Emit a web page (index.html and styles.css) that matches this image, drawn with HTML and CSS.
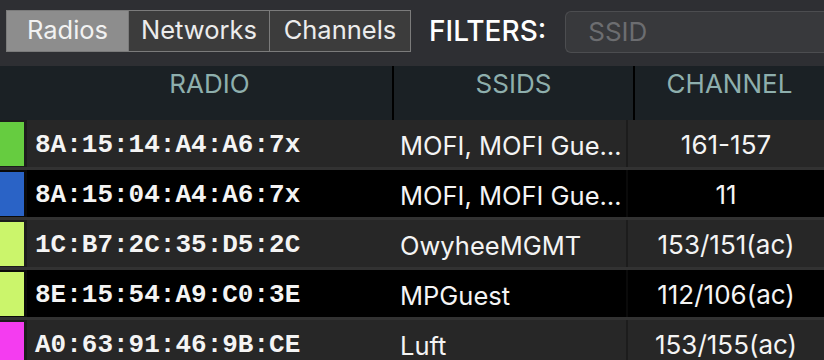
FILE: index.html
```html
<!DOCTYPE html>
<html lang="en">
<head>
<meta charset="utf-8">
<title>Radios</title>
<link rel="stylesheet" href="styles.css">
</head>
<body>
<div class="toolbar">
  <div class="segmented">
    <div class="seg seg-radios selected">Radios</div>
    <div class="seg seg-wide">Networks</div>
    <div class="seg seg-wide">Channels</div>
  </div>
  <div class="filters-label">FILTERS:</div>
  <div class="search"><span class="placeholder">SSID</span></div>
</div>
<div class="table">
  <div class="thead">
    <div class="th th-radio">RADIO</div>
    <div class="th">SSIDS</div>
    <div class="th">CHANNEL</div>
  </div>
  <div class="row odd">
    <div class="bar" style="background:#66cc40"></div>
    <div class="cell mac">8A:15:14:A4:A6:7x</div>
    <div class="cell ssid" title="MOFI, MOFI Guest">MOFI, MOFI Gue…</div>
    <div class="cell chan">161-157</div>
  </div>
  <div class="row even">
    <div class="bar" style="background:#2a63c6"></div>
    <div class="cell mac">8A:15:04:A4:A6:7x</div>
    <div class="cell ssid" title="MOFI, MOFI Guest">MOFI, MOFI Gue…</div>
    <div class="cell chan">11</div>
  </div>
  <div class="row odd">
    <div class="bar" style="background:#cbf56b"></div>
    <div class="cell mac">1C:B7:2C:35:D5:2C</div>
    <div class="cell ssid">OwyheeMGMT</div>
    <div class="cell chan">153/151(ac)</div>
  </div>
  <div class="row even">
    <div class="bar" style="background:#cbf56b"></div>
    <div class="cell mac">8E:15:54:A9:C0:3E</div>
    <div class="cell ssid">MPGuest</div>
    <div class="cell chan">112/106(ac)</div>
  </div>
  <div class="row odd">
    <div class="bar" style="background:#f43cf0"></div>
    <div class="cell mac">A0:63:91:46:9B:CE</div>
    <div class="cell ssid">Luft</div>
    <div class="cell chan">153/155(ac)</div>
  </div>
</div>
</body>
</html>
```
FILE: styles.css
```css
html, body {
  margin: 0;
  padding: 0;
  background: #262626;
  width: 824px;
  height: 360px;
  overflow: hidden;
  font-family: "Inter", "Liberation Sans", sans-serif;
}

.toolbar {
  height: 66px;
  background: #2e2f33;
  display: flex;
  align-items: flex-start;
  box-sizing: border-box;
  padding: 10px 0 0 6px;
}

.segmented {
  display: flex;
  height: 42px;
  border: 1px solid #7b7b7b;
  box-sizing: border-box;
  background: #3c3c3c;
}

.seg {
  display: flex;
  align-items: center;
  justify-content: center;
  color: #ececec;
  font-size: 25.5px;
  padding-bottom: 4px;
  box-sizing: border-box;
}

.seg-radios {
  width: 121px;
}

.seg-wide {
  width: 141px;
  border-left: 1px solid #7b7b7b;
}

.seg.selected {
  background: #8d8d8d;
  color: #f2f2f2;
}

.filters-label {
  margin-left: 18px;
  height: 42px;
  display: flex;
  align-items: center;
  color: #ffffff;
  font-size: 28px;
  font-weight: 500;
}

.search {
  margin-left: 19px;
  margin-top: 1px;
  flex: 1;
  height: 42px;
  box-sizing: border-box;
  border: 1px solid #4c4d50;
  border-right: none;
  border-radius: 6px 0 0 6px;
  background: #38393c;
  display: flex;
  align-items: center;
  padding-left: 22px;
  padding-bottom: 2px;
}

.placeholder {
  color: #6c6d70;
  font-size: 26px;
}

.table {
  display: flex;
  flex-direction: column;
}

.thead {
  height: 54px;
  background: #1b2125;
  display: grid;
  grid-template-columns: 392px 239px 1fr;
  column-gap: 2px;
}

.th {
  background: #1b2125;
  color: #8eafad;
  font-size: 26px;
  text-align: center;
  padding-top: 3px;
  line-height: 30px;
  box-shadow: 2px 0 0 #000;
}

.th-radio {
  padding-left: 27px;
}

.row {
  height: 50px;
  box-sizing: border-box;
  border-bottom: 3px solid #323232;
  display: grid;
  grid-template-columns: 24px 365px 237px 1fr;
}

.row.odd {
  background: #1c1c1c;
}

.row.even {
  background: #0a0a0a;
}

.row .bar {
  margin: 2px 0 1px;
}

.cell {
  display: flex;
  align-items: center;
  color: #f4f4f4;
  white-space: nowrap;
  overflow: hidden;
  padding-top: 2px;
  box-sizing: border-box;
}

.row.odd .cell {
  background: #272727;
}

.row.even .cell {
  background: #000;
}

.row .mac {
  margin-left: 3px;
  width: 365px;
  padding-left: 8px;
  font-family: "Liberation Mono", "Courier New", monospace;
  font-size: 26px;
  font-weight: bold;
}

.row .ssid {
  margin-left: 3px;
  padding-left: 8px;
  padding-right: 4px;
  font-size: 25.5px;
  display: block;
  line-height: 47px;
  text-overflow: ellipsis;
}

.row .chan {
  margin-left: 2px;
  justify-content: center;
  font-size: 26px;
}
```
